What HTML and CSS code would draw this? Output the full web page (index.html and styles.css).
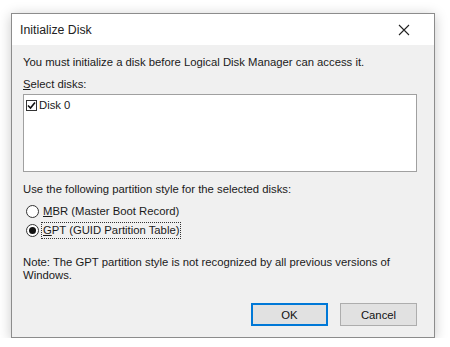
FILE: index.html
```html
<!DOCTYPE html>
<html>
<head>
<meta charset="utf-8">
<link rel="stylesheet" href="styles.css">
</head>
<body>
<div class="dialog">
  <div class="titlebar">
    <span class="title">Initialize Disk</span>
    <svg class="close" width="12" height="12" viewBox="0 0 12 12"><path d="M1 1L11 11M11 1L1 11" stroke="#222" stroke-width="1.1" fill="none"/></svg>
  </div>
  <div class="content">
    <p class="line intro">You must initialize a disk before Logical Disk Manager can access it.</p>
    <p class="line label"><u>S</u>elect disks:</p>
    <div class="listbox">
      <div class="item">
        <span class="check"><svg width="9" height="9" viewBox="0 0 9 9"><path d="M1 4.5L3.5 7L8 1.5" stroke="#111" stroke-width="1.6" fill="none"/></svg></span>
        <span>Disk 0</span>
      </div>
    </div>
    <p class="line label2">Use the following partition style for the selected disks:</p>
    <div class="radios">
      <div class="radio-row">
        <span class="radio"></span>
        <span class="rlabel"><u>M</u>BR (Master Boot Record)</span>
      </div>
      <div class="radio-row">
        <span class="radio on"><span class="dot"></span></span>
        <span class="rlabel focus"><u>G</u>PT (GUID Partition Table)</span>
      </div>
    </div>
    <p class="line note">Note: The GPT partition style is not recognized by all previous versions of Windows.</p>
    <div class="buttons">
      <button class="btn default">OK</button>
      <button class="btn">Cancel</button>
    </div>
  </div>
</div>
</body>
</html>
```
FILE: styles.css
```css
html, body {
  margin: 0;
  padding: 0;
  background: #ffffff;
}
body {
  font-family: "Liberation Sans", Arial, sans-serif;
  font-size: 11.3px;
  color: #1a1a1a;
}
.dialog {
  margin: 13px 0 0 11px;
  width: 422px;
  height: 323px;
  border: 1px solid #8c8c8c;
  box-shadow: 0 2px 12px rgba(0,0,0,0.22);
  display: flex;
  flex-direction: column;
  background: #f0f0f0;
}
.titlebar {
  height: 31px;
  background: #ffffff;
  display: flex;
  align-items: center;
  justify-content: space-between;
  padding: 0 24px 0 8px;
}
.title {
  font-size: 12.3px;
  color: #222;
}
.content {
  flex: 1;
  padding: 0 17px 0 11px;
  display: flex;
  flex-direction: column;
}
.line {
  margin: 0;
  line-height: 14px;
}
.intro { margin-top: 10px; }
.label { margin-top: 8px; }
.listbox {
  box-sizing: border-box;
  margin-top: 3px;
  height: 78px;
  background: #fff;
  border: 1px solid #a0a0a0;
  padding: 4px 2px;
}
.item {
  display: flex;
  align-items: center;
  gap: 2px;
}
.check {
  width: 11px;
  height: 11px;
  border: 1px solid #333;
  background: #fff;
  display: flex;
  align-items: center;
  justify-content: center;
  box-sizing: border-box;
}
.label2 { margin-top: 10px; }
.radios {
  margin-top: 7px;
  display: flex;
  flex-direction: column;
  gap: 2px;
}
.radio-row {
  display: flex;
  align-items: center;
  gap: 3px;
  margin-left: 3px;
  height: 17px;
}
.radio {
  box-sizing: border-box;
  width: 13px;
  height: 13px;
  border: 1px solid #333;
  border-radius: 50%;
  background: #fff;
  display: flex;
  align-items: center;
  justify-content: center;
}
.dot {
  width: 7px;
  height: 7px;
  border-radius: 50%;
  background: #111;
}
.rlabel {
  line-height: 15px;
  padding: 0 1px;
}
.focus {
  outline: 1px dotted #333;
  outline-offset: 0;
}
.note { margin-top: 17px; line-height: 13px; }
.buttons {
  margin-top: auto;
  margin-bottom: 11px;
  display: flex;
  justify-content: flex-end;
  gap: 12px;
}
.btn {
  width: 77px;
  height: 23px;
  font-family: inherit;
  font-size: 11.3px;
  color: #111;
  background: #e1e1e1;
  border: 1px solid #adadad;
  padding: 0;
}
.btn.default {
  border: 2px solid #0078d7;
}
```
